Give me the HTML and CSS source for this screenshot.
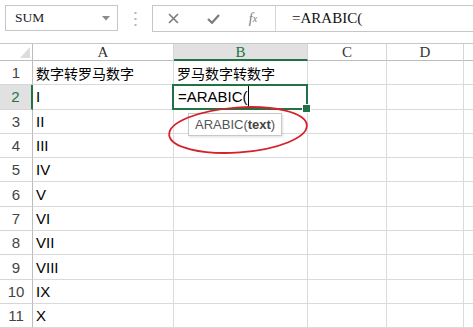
FILE: index.html
```html
<!DOCTYPE html>
<html lang="zh-CN">
<head>
    <meta charset="UTF-8">
    <title>ARABIC</title>
    <link rel="stylesheet" href="styles.css">
</head>
<body>
    <!-- 名称框 + 编辑栏 -->
    <div class="toolbar">
        <div class="namebox">
            <span>SUM</span>
            <svg class="arrow" width="8" height="5" viewBox="0 0 8 5"><polygon points="0,0 8,0 4,4.5" fill="#8a8a8a"/></svg>
        </div>
        <div class="grip">
            <svg width="3" height="14" viewBox="0 0 3 14"><rect x="0.5" y="0" width="2" height="2" fill="#b5b5b5"/><rect x="0.5" y="6" width="2" height="2" fill="#b5b5b5"/><rect x="0.5" y="12" width="2" height="2" fill="#b5b5b5"/></svg>
        </div>
        <div class="fbar">
            <div class="fbtns">
                <span class="btn"><svg width="11" height="11" viewBox="0 0 11 11"><path d="M1 1L10 10M10 1L1 10" stroke="#7b7b7b" stroke-width="1.6" fill="none"/></svg></span>
                <span class="btn"><svg width="13" height="10" viewBox="0 0 13 10"><path d="M1 5L5 8.8L12 1" stroke="#7b7b7b" stroke-width="2.2" fill="none"/></svg></span>
                <span class="btn fx">f<small>x</small></span>
            </div>
            <div class="finput">=ARABIC(</div>
        </div>
    </div>

    <!-- 工作表 -->
    <div class="sheet">
        <div class="grid">
            <div class="corner"><svg width="10" height="11" viewBox="0 0 10 11"><polygon points="10,0 10,11 0,11" fill="#dcdcdc"/></svg></div>
            <div class="col">A</div><div class="col on">B</div><div class="col">C</div><div class="col">D</div><div class="col last"></div>

            <div class="row">1</div><div class="cell cn">数字转罗马数字</div><div class="cell cn">罗马数字转数字</div><div class="cell"></div><div class="cell"></div><div class="cell last"></div>
            <div class="row on">2</div><div class="cell">I</div><div class="cell edit">=ARABIC(<span class="caret"></span></div><div class="cell"></div><div class="cell"></div><div class="cell last"></div>
            <div class="row">3</div><div class="cell">II</div><div class="cell"></div><div class="cell"></div><div class="cell"></div><div class="cell last"></div>
            <div class="row">4</div><div class="cell">III</div><div class="cell"></div><div class="cell"></div><div class="cell"></div><div class="cell last"></div>
            <div class="row">5</div><div class="cell">IV</div><div class="cell"></div><div class="cell"></div><div class="cell"></div><div class="cell last"></div>
            <div class="row">6</div><div class="cell">V</div><div class="cell"></div><div class="cell"></div><div class="cell"></div><div class="cell last"></div>
            <div class="row">7</div><div class="cell">VI</div><div class="cell"></div><div class="cell"></div><div class="cell"></div><div class="cell last"></div>
            <div class="row">8</div><div class="cell">VII</div><div class="cell"></div><div class="cell"></div><div class="cell"></div><div class="cell last"></div>
            <div class="row">9</div><div class="cell">VIII</div><div class="cell"></div><div class="cell"></div><div class="cell"></div><div class="cell last"></div>
            <div class="row">10</div><div class="cell">IX</div><div class="cell"></div><div class="cell"></div><div class="cell"></div><div class="cell last"></div>
            <div class="row">11</div><div class="cell">X</div><div class="cell"></div><div class="cell"></div><div class="cell"></div><div class="cell last"></div>
        </div>

        <!-- 函数提示 -->
        <div class="tip">ARABIC(<b>text</b>)</div>
        <!-- 红圈标注 -->
        <svg class="mark" width="160" height="66" viewBox="0 0 160 66">
            <ellipse cx="78" cy="29" rx="69" ry="22.5" transform="rotate(-4 78 29)" fill="none" stroke="#d4212b" stroke-width="1.8"/>
        </svg>
    </div>
</body>
</html>
```

FILE: styles.css
```css
* {
    margin: 0;
    padding: 0;
    box-sizing: border-box;
}

body {
    width: 473px;
    height: 328px;
    overflow: hidden;
    background: #fff;
    color: #000;
    font-family: "Liberation Sans", "Noto Sans CJK SC", sans-serif;
}

/* 编辑栏 */
.toolbar {
    display: flex;
    align-items: flex-start;
    height: 43px;
    padding: 5px 0 0 5px;
}

.namebox {
    width: 113px;
    height: 26px;
    border: 1px solid #c6c6c6;
    display: flex;
    align-items: center;
    justify-content: space-between;
    padding: 0 7px 0 9px;
    font-family: "Liberation Serif", serif;
    font-size: 13.5px;
    color: #222;
}

.grip {
    width: 34px;
    display: flex;
    justify-content: center;
    padding-top: 7px;
}

.fbar {
    flex: 1;
    height: 27px;
    border: 1px solid #c6c6c6;
    border-right: 0;
    display: flex;
}

.fbtns {
    width: 123px;
    display: flex;
    align-items: center;
    border-right: 1px solid #d6d6d6;
}

.btn {
    width: 40px;
    display: flex;
    justify-content: center;
}

.fx {
    font-family: "Liberation Serif", serif;
    font-style: italic;
    font-size: 14px;
    color: #7b7b7b;
}

.fx small {
    font-size: 10px;
    position: relative;
    top: 2px;
}

.finput {
    padding-left: 16px;
    line-height: 25px;
    font-family: "Liberation Serif", serif;
    font-size: 15px;
    color: #111;
}

/* 工作表 */
.sheet {
    position: relative;
    border-top: 1px solid #c8c8c8;
}

.grid {
    display: grid;
    grid-template-columns: 33px 141px 134px 79px 77px 1fr;
    grid-template-rows: 17px repeat(11, 24.3px);
}

.corner,
.col,
.row {
    background: #fff;
    color: #333;
}

.corner {
    display: flex;
    justify-content: flex-end;
    align-items: flex-end;
    padding: 0 2px 2px 0;
    border-right: 1px solid #bdbdbd;
    border-bottom: 1px solid #bdbdbd;
}

.col {
    text-align: center;
    font-family: "Liberation Serif", serif;
    font-size: 15px;
    line-height: 16px;
    border-right: 1px solid #d6d6d6;
    border-bottom: 1px solid #bdbdbd;
}

.col.on {
    background: #e1e1e1;
    color: #217346;
    border-bottom: 2px solid #217346;
}

.row {
    display: flex;
    align-items: center;
    justify-content: center;
    font-size: 15px;
    color: #444;
    border-right: 1px solid #bdbdbd;
    border-bottom: 1px solid #d6d6d6;
}

.row.on {
    background: #e1e1e1;
    color: #217346;
    border-right: 2px solid #217346;
}

.cell {
    display: flex;
    align-items: center;
    padding-left: 3px;
    font-size: 15px;
    white-space: nowrap;
    border-right: 1px solid #dadada;
    border-bottom: 1px solid #dadada;
}

.cell.cn {
    font-size: 14px;
}

.last {
    border-right: 0;
}

/* 编辑中的单元格 */
.edit {
    position: relative;
    padding-left: 4px;
}

.edit::after {
    content: "";
    position: absolute;
    left: -2px;
    top: -1px;
    right: -1px;
    bottom: -1px;
    border: 2px solid #217346;
}

.edit::before {
    content: "";
    position: absolute;
    right: -4px;
    bottom: -4px;
    width: 7px;
    height: 7px;
    background: #217346;
    border: 1px solid #fff;
    z-index: 2;
}

.caret {
    display: inline-block;
    width: 1px;
    height: 21px;
    background: #000;
}

.tip {
    position: absolute;
    left: 188px;
    top: 69px;
    height: 23px;
    padding: 0 6px;
    border: 1px solid #c8c8c8;
    background: #fff;
    box-shadow: 1px 1px 2px rgba(0, 0, 0, 0.12);
    font-size: 13px;
    line-height: 21px;
    color: #555;
}

.tip b {
    color: #444;
}

.mark {
    position: absolute;
    left: 160px;
    top: 57px;
    overflow: visible;
}
```
